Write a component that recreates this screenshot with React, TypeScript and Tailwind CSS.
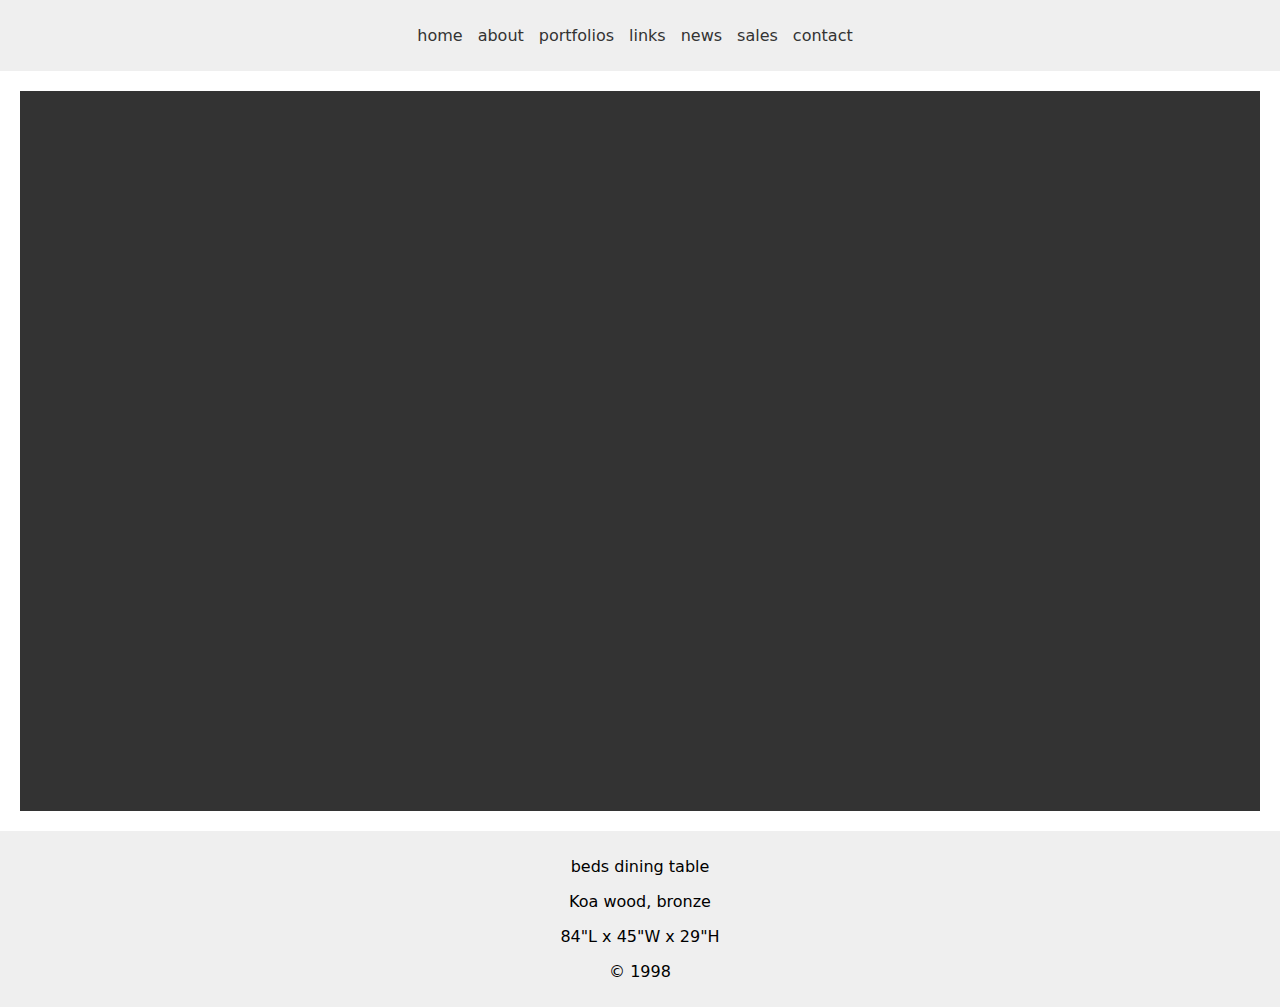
export default function App() {
  const links = ["home", "about", "portfolios", "links", "news", "sales", "contact"];
  return (
    <div className="min-h-[1007px] bg-white font-['DejaVu_Sans',sans-serif] text-[16px]">
      <header className="bg-[#efefef] py-[26px]">
        <nav className="flex justify-center gap-[15px] pr-[10px] leading-[19px] text-[#333]">
          {links.map((l) => (
            <a key={l} href="#" className="text-[#333]">
              {l}
            </a>
          ))}
        </nav>
      </header>
      <main className="p-5">
        <div className="h-[720px] bg-[#333]" />
      </main>
      <footer className="flex flex-col items-center gap-4 bg-[#efefef] py-[26px] leading-[19px] text-black">
        <p>beds dining table</p>
        <p>Koa wood, bronze</p>
        <p>84"L x 45"W x 29"H</p>
        <p>© 1998</p>
      </footer>
    </div>
  );
}
